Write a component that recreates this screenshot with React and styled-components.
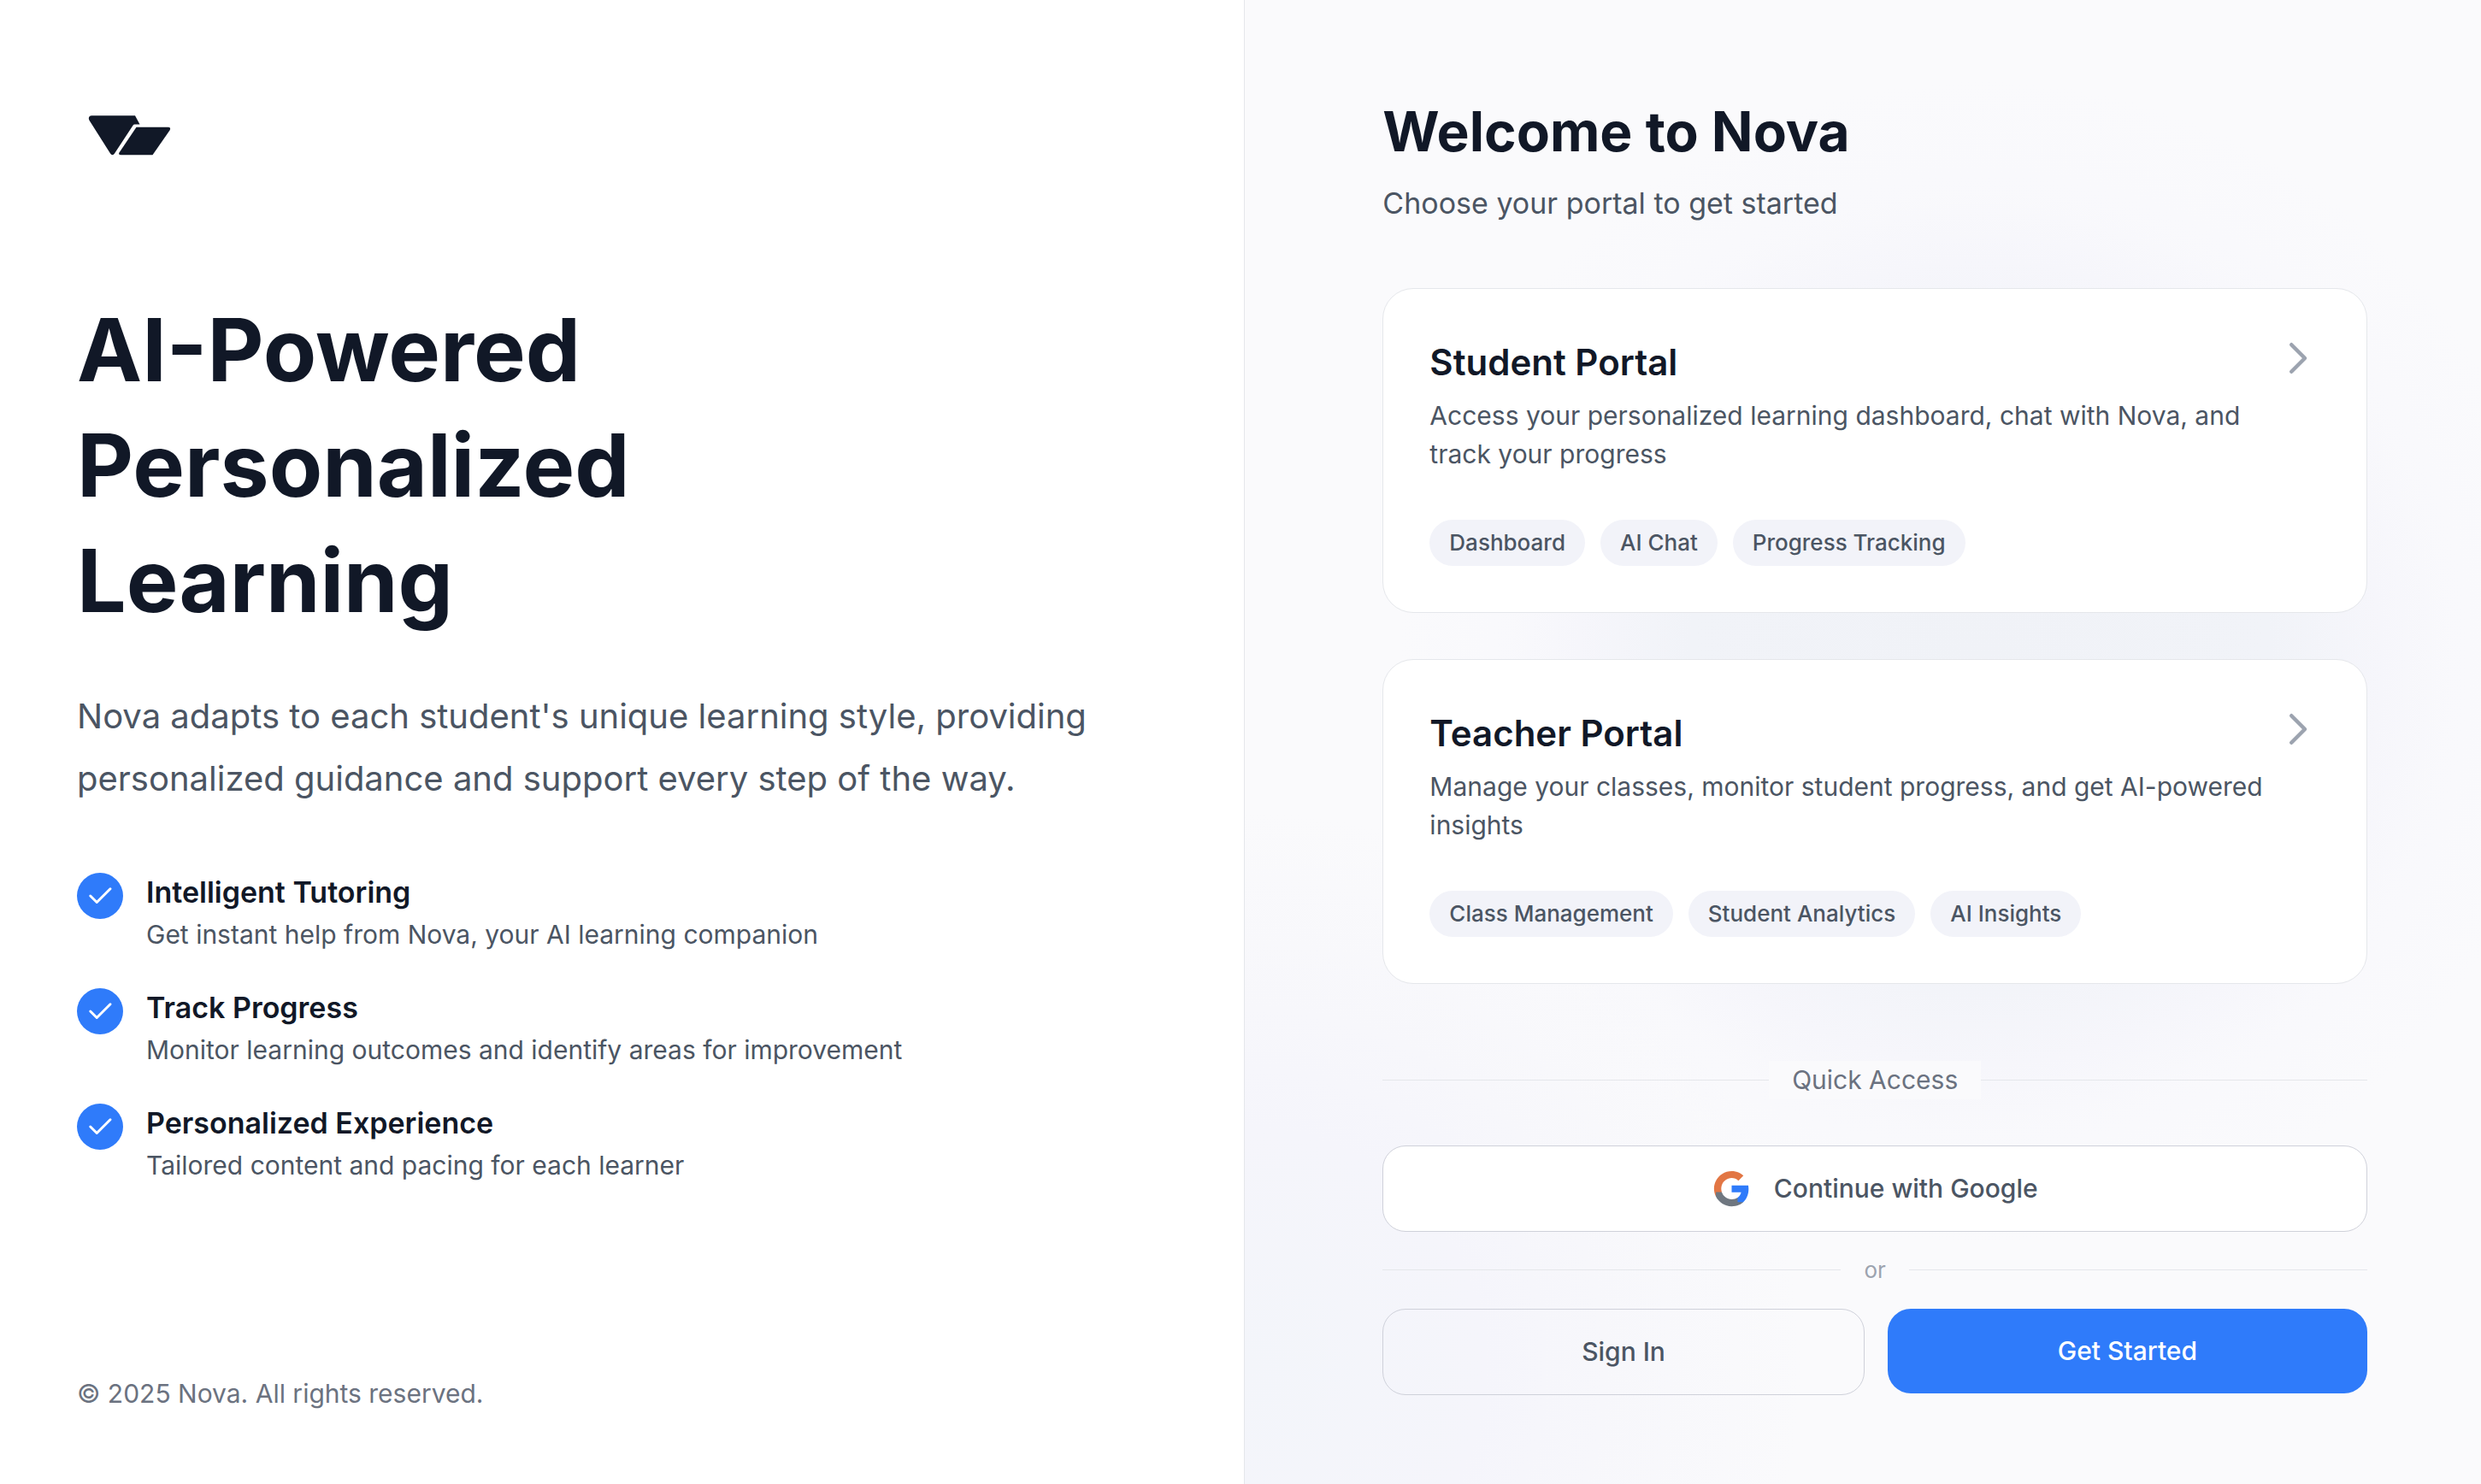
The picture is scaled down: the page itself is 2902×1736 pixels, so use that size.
import React from 'react';
import styled, { createGlobalStyle } from 'styled-components';

const GlobalStyles = createGlobalStyle`
  * {
    box-sizing: border-box;
    margin: 0;
    padding: 0;
  }

  body {
    font-family: Inter, 'Liberation Sans', sans-serif;
    color: #111827;
    background: #ffffff;
    -webkit-font-smoothing: antialiased;
  }

  button {
    font-family: inherit;
    cursor: pointer;
  }
`;

const Page = styled.div`
  display: flex;
  min-height: 100vh;
`;

const IntroPanel = styled.section`
  flex: 1 1 0;
  display: flex;
  flex-direction: column;
  padding: 95px 90px 83px;
  background: #ffffff;
`;

const PortalPanel = styled.main`
  flex: 0 0 49.85%;
  display: flex;
  align-items: center;
  padding: 100px 133px 100px 161px;
  border-left: 1px solid #e5e7eb;
  background:
    radial-gradient(circle at 860px 775px, #f0f2f7 0, #f1f3f8 340px, #f6f6fb 470px, rgba(248, 248, 252, 0.6) 550px, rgba(250, 250, 252, 0) 680px),
    radial-gradient(circle at 0px 1600px, #f3f5fa 0, #f5f5fb 280px, #f7f7fb 420px, rgba(250, 250, 252, 0) 650px),
    #fafafc;
`;

const Logo = styled.svg`
  width: 126px;
  height: 126px;
  margin-bottom: 121px;
`;

const Headline = styled.h1`
  font-size: 102px;
  line-height: 135px;
  font-weight: 700;
  margin-bottom: 54px;
`;

const Lead = styled.p`
  max-width: 1260px;
  font-size: 40px;
  line-height: 73px;
  color: #4b5563;
  margin-bottom: 70px;
`;

const FeatureList = styled.ul`
  display: flex;
  flex-direction: column;
  gap: 36px;
  list-style: none;
`;

const FeatureItem = styled.li`
  display: flex;
  align-items: flex-start;
  gap: 27px;
`;

const FeatureBadge = styled.span`
  flex: none;
  display: flex;
  align-items: center;
  justify-content: center;
  width: 54px;
  height: 54px;
  margin-top: 4px;
  border-radius: 50%;
  background: #2f7bfa;

  svg {
    width: 36px;
    height: 36px;
  }
`;

const FeatureTitle = styled.h3`
  font-size: 34px;
  line-height: 54px;
  font-weight: 600;
`;

const FeatureText = styled.p`
  font-size: 30px;
  line-height: 45px;
  color: #4b5563;
`;

const Footer = styled.footer`
  margin-top: auto;
  font-size: 30px;
  line-height: 45px;
  color: #6b7280;
`;

const PortalContent = styled.div`
  width: 100%;
`;

const WelcomeTitle = styled.h2`
  font-size: 64px;
  line-height: 98px;
  font-weight: 700;
  margin-bottom: 8px;
`;

const WelcomeText = styled.p`
  font-size: 34px;
  line-height: 54px;
  color: #4b5563;
  margin-bottom: 72px;
`;

const PortalList = styled.div`
  display: flex;
  flex-direction: column;
  gap: 54px;
`;

const PortalCard = styled.a`
  display: block;
  padding: 54px;
  border: 1px solid #e5e7eb;
  border-radius: 36px;
  background: #ffffff;
  color: inherit;
  text-decoration: none;
`;

const CardTop = styled.div`
  display: flex;
  align-items: flex-start;
  justify-content: space-between;
  margin-bottom: 54px;

  svg {
    flex: none;
    width: 54px;
    height: 54px;
  }
`;

const CardTitle = styled.h3`
  font-size: 42px;
  line-height: 64px;
  font-weight: 600;
  margin-bottom: 8px;
`;

const CardText = styled.p`
  font-size: 30px;
  line-height: 45px;
  color: #4b5563;
`;

const TagRow = styled.div`
  display: flex;
  gap: 18px;
`;

const Tag = styled.span`
  padding: 0 23px;
  border-radius: 27px;
  background: #f2f3f9;
  font-size: 26px;
  line-height: 54px;
  font-weight: 500;
  color: #4b5563;
`;

const Divider = styled.div`
  display: flex;
  align-items: center;
  margin: ${(props) => (props.$small ? '27px 0' : '90px 0 54px')};
  font-size: ${(props) => (props.$small ? '26px' : '30px')};
  line-height: ${(props) => (props.$small ? '36px' : '45px')};
  color: ${(props) => (props.$small ? '#9ca3af' : '#6b7280')};

  &::before,
  &::after {
    content: '';
    flex: 1;
    height: 1px;
    background: #e5e7eb;
  }
`;

const DividerLabel = styled.span`
  padding: 0 27px;
  background: ${(props) => (props.$plain ? 'transparent' : '#fafafc')};
`;

const Button = styled.button`
  flex: 1;
  display: flex;
  align-items: center;
  justify-content: center;
  gap: 27px;
  width: 100%;
  padding: 27px;
  border: ${(props) => (props.$primary ? 'none' : '1px solid #cfd1da')};
  border-radius: 27px;
  background: ${(props) => props.$background || 'transparent'};
  color: ${(props) => (props.$primary ? '#ffffff' : '#4b5563')};
  font-size: 30px;
  line-height: 45px;
  font-weight: 500;

  svg {
    width: 45px;
    height: 45px;
  }
`;

const ButtonRow = styled.div`
  display: flex;
  align-items: flex-start;
  gap: 27px;
`;

const features = [
  { title: 'Intelligent Tutoring', text: 'Get instant help from Nova, your AI learning companion' },
  { title: 'Track Progress', text: 'Monitor learning outcomes and identify areas for improvement' },
  { title: 'Personalized Experience', text: 'Tailored content and pacing for each learner' },
];

const portals = [
  {
    title: 'Student Portal',
    text: 'Access your personalized learning dashboard, chat with Nova, and track your progress',
    tags: ['Dashboard', 'AI Chat', 'Progress Tracking'],
  },
  {
    title: 'Teacher Portal',
    text: 'Manage your classes, monitor student progress, and get AI-powered insights',
    tags: ['Class Management', 'Student Analytics', 'AI Insights'],
  },
];

const CheckIcon = () => (
  <svg viewBox="0 0 24 24" fill="none" stroke="#ffffff" strokeWidth="2" strokeLinecap="round" strokeLinejoin="round" aria-hidden="true">
    <path d="M20 6.500 9.500 17l-5-5" />
  </svg>
);

const ChevronIcon = () => (
  <svg viewBox="0 0 24 24" fill="none" stroke="#9ca3af" strokeWidth="2" strokeLinecap="round" strokeLinejoin="round" aria-hidden="true">
    <path d="M9 5l7 7-7 7" />
  </svg>
);

const GoogleIcon = () => (
  <svg viewBox="0 0 24 24" aria-hidden="true">
    <path fill="#e27644" d="M12 5.38c1.62 0 3.06.56 4.21 1.64l3.15-3.15C17.45 2.09 14.97 1 12 1 7.7 1 3.99 3.47 2.18 7.07l3.66 2.84c.87-2.6 3.3-4.53 6.16-4.53z" />
    <path fill="#e27644" d="M5.84 14.09c-.22-.66-.35-1.36-.35-2.09s.13-1.43.35-2.09V7.07H2.18C1.43 8.55 1 10.22 1 12s.43 3.45 1.18 4.93l3.66-2.84z" />
    <path fill="#6f7780" d="M12 23c2.97 0 5.46-.98 7.28-2.66l-3.57-2.77c-.98.66-2.23 1.06-3.71 1.06-2.86 0-5.29-1.93-6.16-4.53H2.18v2.84C3.99 20.53 7.7 23 12 23z" />
    <path fill="#2f7bfa" d="M22.56 12.25c0-.78-.07-1.53-.2-2.25H12v4.26h5.92c-.26 1.37-1.04 2.53-2.21 3.31v2.77h3.57c2.08-1.92 3.28-4.74 3.28-8.09z" />
  </svg>
);

export default function App() {
  return (
    <Page>
      <GlobalStyles />

      <IntroPanel>
        <Logo viewBox="0 0 126 126" fill="#111827" role="img" aria-label="Nova">
          <path d="M17 40.3H68L73.5 50.5H67.5Q66.3 50.5 65.5 51.7L44 84.6Q43 86.3 41.5 86.3T39 84.6L14.3 45.5Q12.5 41 17 40.3Z" />
          <path d="M69.5 53.8H106.5Q110.5 54 108.5 57.5L88.5 86.3H51.5Q48 86 49.5 83.5Z" />
        </Logo>

        <Headline>
          AI-Powered
          <br />
          Personalized
          <br />
          Learning
        </Headline>
        <Lead>
          Nova adapts to each student's unique learning style, providing personalized guidance and
          support every step of the way.
        </Lead>

        <FeatureList>
          {features.map((feature) => (
            <FeatureItem key={feature.title}>
              <FeatureBadge>
                <CheckIcon />
              </FeatureBadge>
              <div>
                <FeatureTitle>{feature.title}</FeatureTitle>
                <FeatureText>{feature.text}</FeatureText>
              </div>
            </FeatureItem>
          ))}
        </FeatureList>

        <Footer>© 2025 Nova. All rights reserved.</Footer>
      </IntroPanel>

      <PortalPanel>
        <PortalContent>
          <WelcomeTitle>Welcome to Nova</WelcomeTitle>
          <WelcomeText>Choose your portal to get started</WelcomeText>

          <PortalList>
            {portals.map((portal) => (
              <PortalCard key={portal.title} href="#">
                <CardTop>
                  <div>
                    <CardTitle>{portal.title}</CardTitle>
                    <CardText>{portal.text}</CardText>
                  </div>
                  <ChevronIcon />
                </CardTop>
                <TagRow>
                  {portal.tags.map((tag) => (
                    <Tag key={tag}>{tag}</Tag>
                  ))}
                </TagRow>
              </PortalCard>
            ))}
          </PortalList>

          <Divider>
            <DividerLabel>Quick Access</DividerLabel>
          </Divider>

          <Button type="button" $background="#ffffff">
            <GoogleIcon />
            Continue with Google
          </Button>

          <Divider $small>
            <DividerLabel $plain>or</DividerLabel>
          </Divider>

          <ButtonRow>
            <Button type="button">Sign In</Button>
            <Button type="button" $primary $background="#2f7bfa">
              Get Started
            </Button>
          </ButtonRow>
        </PortalContent>
      </PortalPanel>
    </Page>
  );
}
